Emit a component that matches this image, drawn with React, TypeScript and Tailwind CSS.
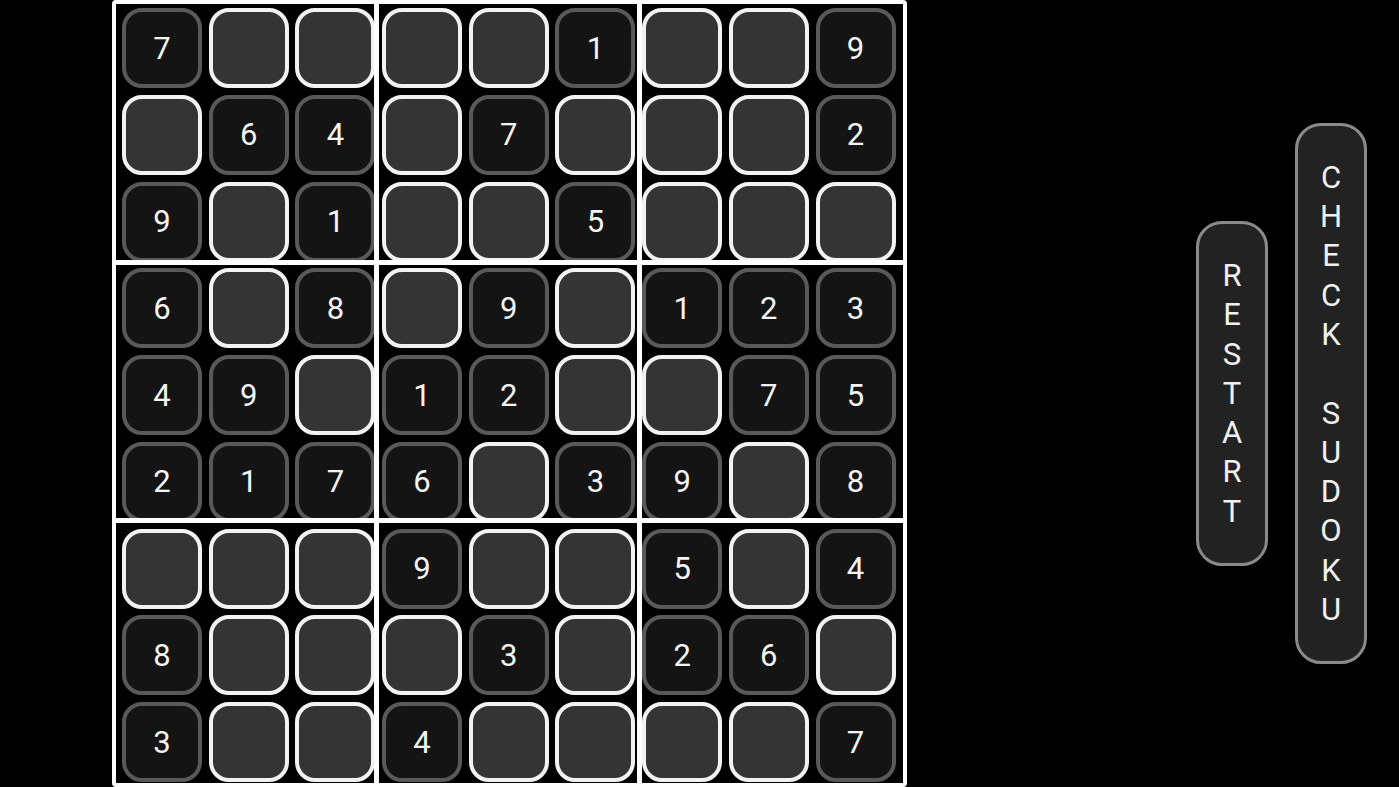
const PUZZLE = [
  "700001009",
  "064070002",
  "901005000",
  "608090123",
  "490120075",
  "217603908",
  "000900504",
  "800030260",
  "300400007",
];

function Cell({ value }: { value: string }) {
  const given = value !== "0";
  return (
    <div
      className={
        given
          ? "w-[80px] h-[80px] rounded-[20px] border-[4px] border-[#595959] bg-[#141414] flex items-center justify-center"
          : "w-[80px] h-[80px] rounded-[20px] border-[4px] border-[#f2f2f2] bg-[#343434]"
      }
    >
      {given && <span className="text-[31px] leading-none text-[#f4f4f4]">{value}</span>}
    </div>
  );
}

function Board() {
  return (
    <div className="relative w-[795px] h-[787px] border-4 border-white rounded-[4px] pl-[6px] pt-[4px]">
      <div className="grid grid-cols-[repeat(9,80px)] gap-x-[6.7px] gap-y-[6.75px]">
        {PUZZLE.flatMap((row, r) =>
          row.split("").map((v, c) => <Cell key={`${r}-${c}`} value={v} />)
        )}
      </div>
      {/* 3x3 block separators */}
      <div className="absolute top-0 bottom-0 left-[258px] w-[5px] bg-white" />
      <div className="absolute top-0 bottom-0 left-[521px] w-[5px] bg-white" />
      <div className="absolute left-0 right-0 top-[256px] h-[5px] bg-white" />
      <div className="absolute left-0 right-0 top-[514px] h-[5px] bg-white" />
    </div>
  );
}

function VerticalButton({ label }: { label: string }) {
  return (
    <button className="w-[72px] py-[32px] rounded-[26px] border-[3px] border-[#8a8a8a] bg-[#222222] flex flex-col items-center text-[#f0f0f0] text-[31px] leading-[39.3px]">
      {label.split("").map((ch, i) => (
        <span key={i} className="h-[39.3px]">
          {ch === " " ? "\u00a0" : ch}
        </span>
      ))}
    </button>
  );
}

export default function App() {
  return (
    <div className="w-full h-[787px] bg-black flex items-center font-['Roboto',sans-serif] overflow-hidden">
      <div className="ml-[112px]">
        <Board />
      </div>
      <div className="flex-1" />
      <div className="flex items-center gap-[27px] mr-[32px]">
        <VerticalButton label="RESTART" />
        <VerticalButton label="CHECK SUDOKU" />
      </div>
    </div>
  );
}
